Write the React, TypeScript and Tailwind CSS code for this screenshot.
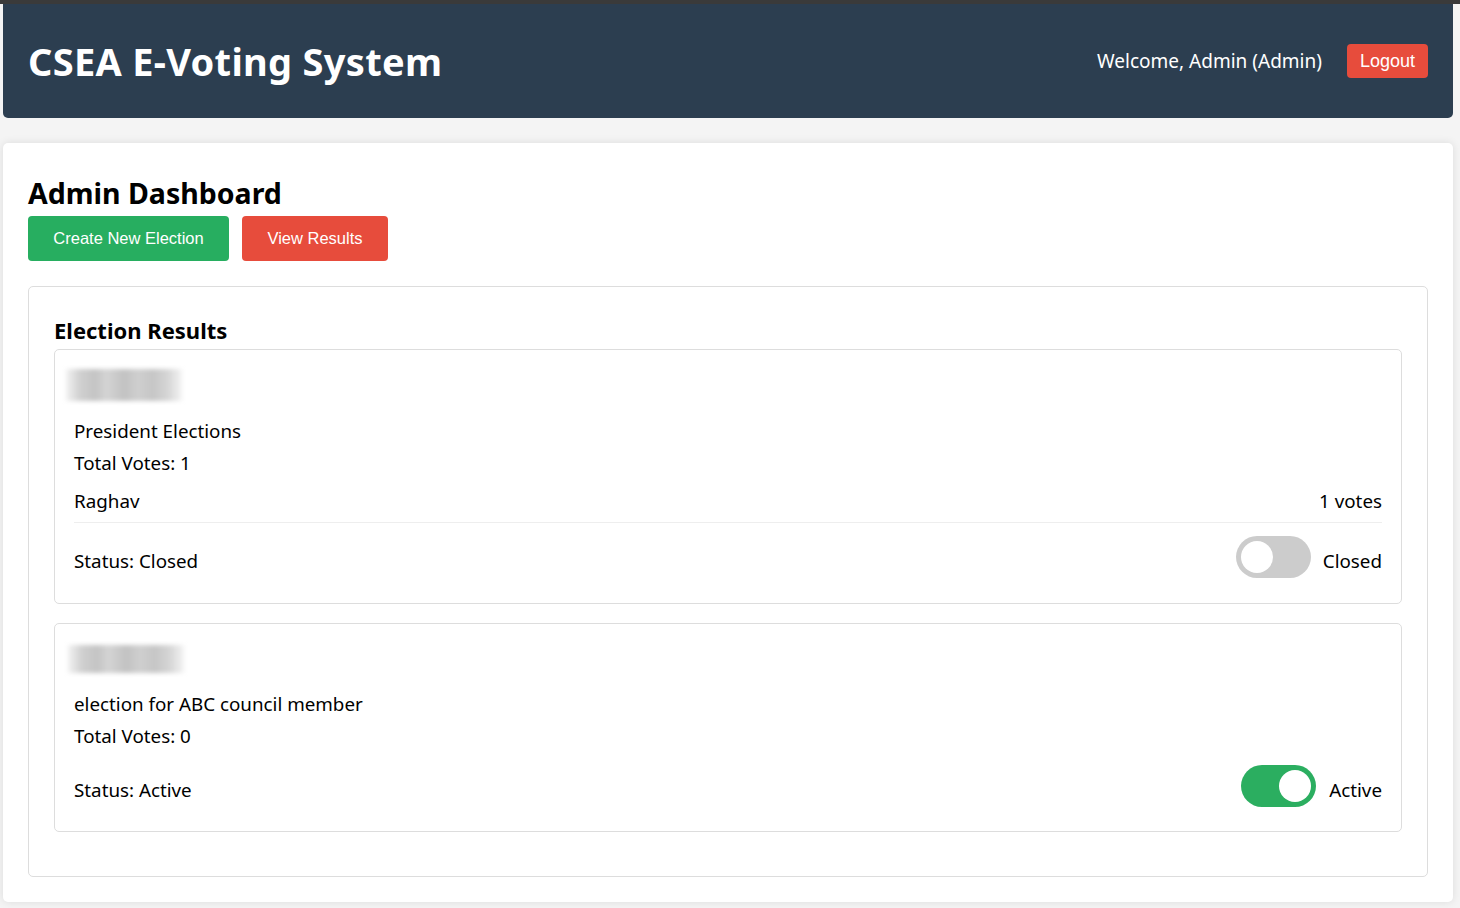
import React from "react";

const font = "font-['Noto_Sans','Open_Sans',sans-serif]";

function Blur({ h }: { h: string }) {
  return (
    <div
      className={`${h} w-[116px] bg-[linear-gradient(90deg,#f2f2f2_0%,#d0d0d0_12%,#c4c4c4_25%,#d4d4d4_35%,#c2c2c2_50%,#cfcfcf_62%,#c6c6c6_75%,#d6d6d6_88%,#f4f4f4_100%)] blur-[2px]`}
    />
  );
}

function Toggle({ on }: { on: boolean }) {
  return (
    <div
      className={`relative top-[-4px] h-[42px] w-[75px] rounded-full ${on ? "bg-[#2bae60]" : "bg-[#cccccc]"}`}
    >
      <div
        className={`absolute top-[5px] h-[32px] w-[32px] rounded-full bg-white ${on ? "left-[38px]" : "left-[5px]"}`}
      />
    </div>
  );
}

export default function App() {
  return (
    <div className={`min-h-[908px] bg-[#f4f4f4] ${font} text-black`}>
      <div className="h-[4px] bg-[#3a3a3a]" />
      <div className="pl-[3px] pr-[7px]">
        <header className="flex h-[114px] items-center justify-between rounded-b-[5px] bg-[#2c3e50] pl-[25px] pr-[25px] text-white">
          <h1 className="text-[38px] font-bold leading-none tracking-[0.3px]">CSEA E-Voting System</h1>
          <div className="flex items-center gap-[25px]">
            <span className="text-[19px]">Welcome, Admin (Admin)</span>
            <button className="h-[34px] rounded-[4px] bg-[#e74c3c] px-[13px] font-['Liberation_Sans',Arial,sans-serif] text-[18px] text-white">
              Logout
            </button>
          </div>
        </header>

        <main className="mt-[25px] h-[759px] rounded-[5px] bg-white px-[25px] pt-[32px] shadow-[0_0_8px_rgba(0,0,0,0.1)]">
          <h2 className="text-[28.5px] font-bold leading-[36px]">Admin Dashboard</h2>
          <div className="mt-[5px] flex gap-[13px]">
            <button className="h-[45px] w-[201px] rounded-[4px] bg-[#27ae60] font-['Liberation_Sans',Arial,sans-serif] text-[16.5px] text-white">
              Create New Election
            </button>
            <button className="h-[45px] w-[146px] rounded-[4px] bg-[#e74c3c] font-['Liberation_Sans',Arial,sans-serif] text-[16.5px] text-white">
              View Results
            </button>
          </div>

          <section className="mt-[25px] h-[591px] rounded-[5px] border border-[#dddddd] px-[25px] pt-[28px]">
            <h3 className="text-[22px] font-bold leading-[30px]">Election Results</h3>

            <div className="mt-[4px] rounded-[5px] border border-[#dddddd] pb-[21px] pl-[11px] pr-[19px] pt-[19px]">
              <Blur h="h-[32px]" />
              <div className="pl-[8px] text-[18.8px]">
                <p className="mt-[14px] leading-[32px]">President Elections</p>
                <p className="leading-[32px]">Total Votes: 1</p>
                <div className="mt-[8px] flex justify-between border-b border-[#eeeeee] pb-[7px] leading-[28px]">
                  <span>Raghav</span>
                  <span>1 votes</span>
                </div>
                <div className="mt-[17px] flex h-[42px] items-center justify-between">
                  <span>Status: Closed</span>
                  <div className="flex items-center gap-[12px]">
                    <Toggle on={false} />
                    <span>Closed</span>
                  </div>
                </div>
              </div>
            </div>

            <div className="mt-[19px] rounded-[5px] border border-[#dddddd] pb-[20px] pl-[13px] pr-[19px] pt-[21px]">
              <Blur h="h-[28px]" />
              <div className="pl-[6px] text-[18.8px]">
                <p className="mt-[15px] leading-[32px]">election for ABC council member</p>
                <p className="leading-[32px]">Total Votes: 0</p>
                <div className="mt-[17px] flex h-[42px] items-center justify-between">
                  <span>Status: Active</span>
                  <div className="flex items-center gap-[13px]">
                    <Toggle on={true} />
                    <span>Active</span>
                  </div>
                </div>
              </div>
            </div>
          </section>
        </main>
      </div>
    </div>
  );
}
